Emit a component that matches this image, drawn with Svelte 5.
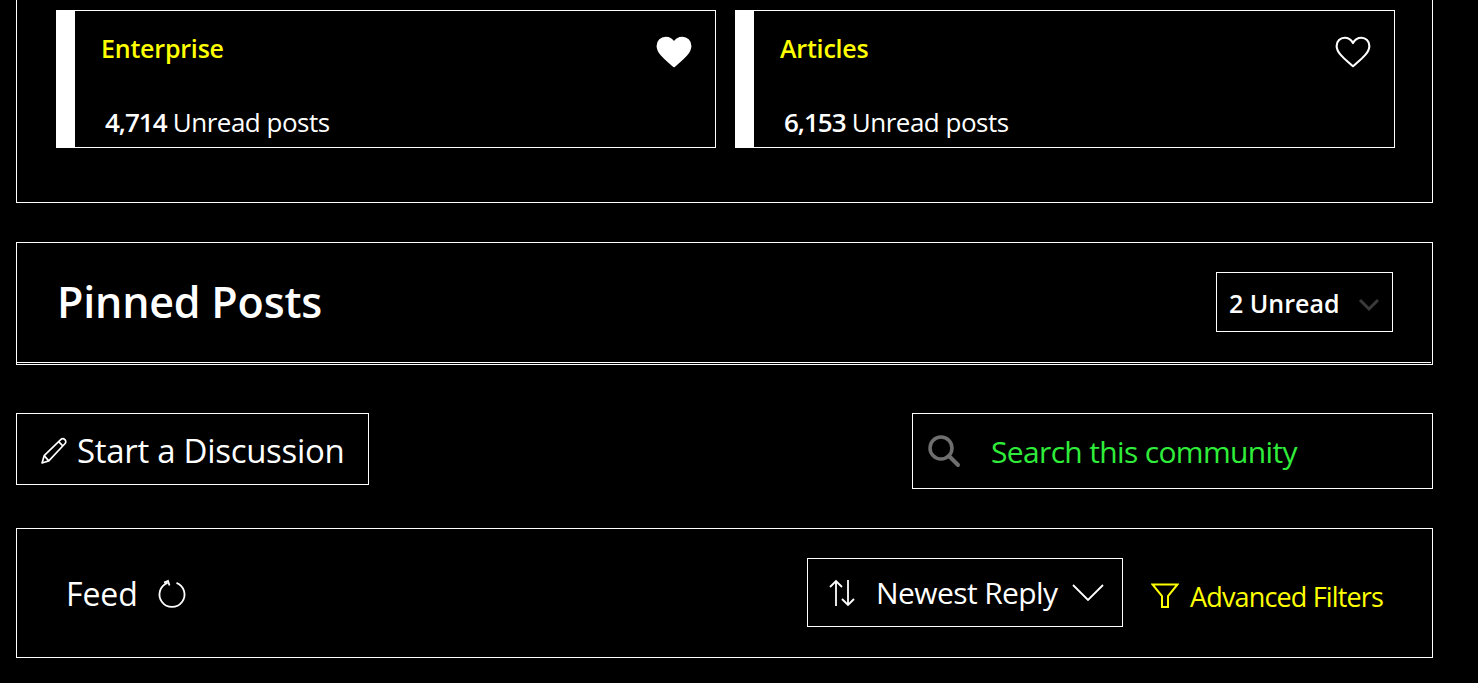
<script>
  const boards = [
    { name: 'Enterprise', count: '4,714', liked: true },
    { name: 'Articles', count: '6,153', liked: false }
  ];
</script>

<main class="page">
  <section class="boards">
    {#each boards as board}
      <article class="card">
        <div class="card-top">
          <h3>{board.name}</h3>
          <svg class="heart" viewBox="0 0 36 32" width="38" height="34">
            <path
              d="M18 29.5C12 24 2.5 17.5 2.5 10.2 2.5 5.6 6 2.5 10 2.5c3.4 0 6.3 1.7 8 5 1.700-3.300 4.600-5 8-5 4 0 7.500 3.100 7.500 7.700C33.500 17.500 24 24 18 29.500z"
              fill={board.liked ? '#fff' : 'none'}
              stroke="#fff"
              stroke-width="2"
              stroke-linejoin="round"
            />
          </svg>
        </div>
        <p class="unread"><strong>{board.count}</strong> Unread posts</p>
      </article>
    {/each}
  </section>

  <section class="pinned">
    <header class="pinned-head">
      <h2>Pinned Posts</h2>
      <div class="unread-select">
        <span>2 Unread</span>
        <svg viewBox="0 0 22 14" width="22" height="14">
          <path d="M2 2l9 9 9-9" fill="none" stroke="#3a3a3a" stroke-width="3" />
        </svg>
      </div>
    </header>
  </section>

  <div class="actions">
    <button class="start">
      <svg viewBox="0 0 28 28" width="29" height="29">
        <path
          d="M2 26l2-7L20 3.500c1.200-1.200 2.800-1.200 4 0s1.200 2.800 0 4L8.500 24zM4 19l4.500 5M18 5.500l4.500 4.500"
          fill="none"
          stroke="#fff"
          stroke-width="1.600"
          stroke-linejoin="round"
        />
      </svg>
      Start a Discussion
    </button>
    <div class="search">
      <svg viewBox="0 0 34 34" width="34" height="34">
        <circle cx="14" cy="14" r="11" fill="none" stroke="#6f6f6f" stroke-width="3.500" />
        <path d="M22 22l9 9" stroke="#6f6f6f" stroke-width="4" stroke-linecap="round" />
      </svg>
      <span>Search this community</span>
    </div>
  </div>

  <section class="feed">
    <div class="feed-title">
      <span>Feed</span>
      <svg viewBox="0 0 30 30" width="30" height="30">
        <path
          d="M10.500 4.800a12.500 12.500 0 1 0 9 0M7 4.500l4-1.500 1.500 4.500"
          fill="none"
          stroke="#fff"
          stroke-width="1.800"
        />
      </svg>
    </div>
    <div class="feed-tools">
      <div class="sort">
        <svg viewBox="0 0 28 30" width="28" height="30">
          <path
            d="M8 28V3M2 9l6-6 6 6M20 2v25M14 21l6 6 6-6"
            fill="none"
            stroke="#fff"
            stroke-width="1.800"
          />
        </svg>
        <span>Newest Reply</span>
        <svg viewBox="0 0 32 20" width="32" height="20">
          <path d="M1 2l15 15L31 2" fill="none" stroke="#fff" stroke-width="1.800" />
        </svg>
      </div>
      <div class="filters">
        <svg viewBox="0 0 28 26" width="28" height="26">
          <path d="M1.500 1.500h25L17 13v11h-6V13z" fill="none" stroke="#ff0" stroke-width="2" />
        </svg>
        <span>Advanced Filters</span>
      </div>
    </div>
  </section>
</main>

<style>
  :global(body) {
    background: #000;
    color: #fff;
    font-family: "Open Sans", "Noto Sans", sans-serif;
    overflow: hidden;
  }

  .page {
    width: 1417px;
    margin-left: 16px;
  }

  section {
    border: 1px solid #fff;
    box-sizing: border-box;
  }

  .boards {
    border-top: none;
    height: 203px;
    padding: 10px 37px 0 39px;
    display: flex;
    gap: 19px;
  }

  .card {
    width: 660px;
    height: 138px;
    box-sizing: border-box;
    border: 1px solid #fff;
    border-left: 19px solid #fff;
    padding: 20px 22px 0 26px;
  }

  .card-top {
    display: flex;
    justify-content: space-between;
    align-items: flex-start;
    height: 74px;
  }

  h3 {
    margin: 0;
    font-size: 25px;
    line-height: 34px;
    font-weight: 600;
    color: #ff0;
    letter-spacing: -0.2px;
  }

  .heart {
    margin-top: 4px;
  }

  .unread {
    margin: 0 0 0 4px;
    font-size: 26px;
    line-height: 34px;
    letter-spacing: -0.5px;
  }

  .unread strong {
    font-weight: 600;
    letter-spacing: -1px;
  }

  .pinned {
    margin-top: 39px;
    height: 123px;
  }

  .pinned-head {
    height: 120px;
    margin-right: 1px;
    box-sizing: border-box;
    border-bottom: 1px solid #fff;
    padding: 29px 38px 0 40px;
    display: flex;
    justify-content: space-between;
    align-items: flex-start;
  }

  h2 {
    margin: 1px 0 0;
    font-size: 43px;
    line-height: 58px;
    font-weight: 600;
    letter-spacing: -0.2px;
  }

  .unread-select {
    width: 177px;
    height: 60px;
    box-sizing: border-box;
    border: 1px solid #fff;
    padding: 2px 12px 0;
    display: flex;
    align-items: center;
    justify-content: space-between;
    font-size: 25px;
    font-weight: 600;
  }

  .unread-select svg {
    margin-top: 4px;
  }

  .actions {
    margin-top: 48px;
    display: flex;
    justify-content: space-between;
    align-items: flex-start;
  }

  .start {
    width: 353px;
    height: 72px;
    box-sizing: border-box;
    background: #000;
    color: #fff;
    border: 1px solid #fff;
    padding: 2px 0 0 23px;
    display: flex;
    align-items: center;
    gap: 8px;
    font-family: inherit;
    font-size: 33px;
    letter-spacing: -0.3px;
    white-space: nowrap;
  }

  .search {
    width: 521px;
    height: 76px;
    box-sizing: border-box;
    border: 1px solid #fff;
    padding-left: 14px;
    display: flex;
    align-items: center;
    gap: 30px;
    color: #2fed3a;
    font-size: 30px;
    letter-spacing: -0.65px;
  }

  .feed {
    margin-top: 39px;
    height: 130px;
    padding: 0 49px 0 49px;
    display: flex;
    justify-content: space-between;
    align-items: center;
  }

  .feed-title {
    display: flex;
    align-items: center;
    gap: 19px;
    font-size: 32px;
    letter-spacing: -0.1px;
  }

  .feed-tools {
    display: flex;
    align-items: center;
    gap: 28px;
    margin-top: -1px;
  }

  .sort {
    width: 316px;
    height: 69px;
    box-sizing: border-box;
    border: 1px solid #fff;
    padding: 0 0 0 20px;
    display: flex;
    align-items: center;
    font-size: 30px;
    letter-spacing: -0.6px;
  }

  .sort span {
    margin: 0 14px 0 20px;
  }

  .filters {
    display: flex;
    align-items: center;
    gap: 11px;
    color: #ff0;
    font-size: 27px;
    letter-spacing: -0.85px;
    margin-top: 7px;
  }
</style>
